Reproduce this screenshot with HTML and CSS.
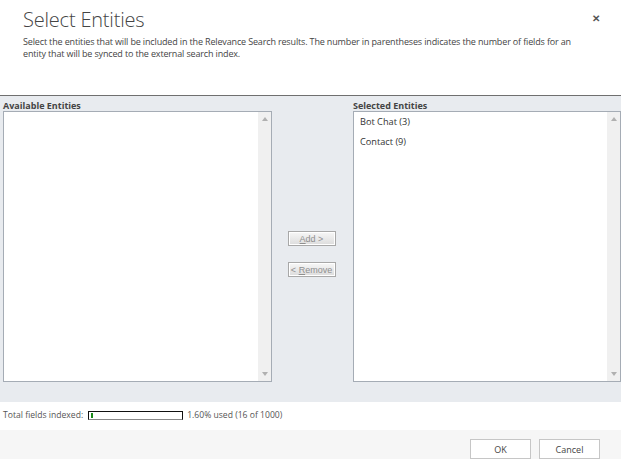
FILE: index.html
```html
<!DOCTYPE html>
<html lang="en">
<head>
	<meta charset="UTF-8">
	<title>Select Entities</title>
	<link rel="stylesheet" href="styles.css">
</head>
<body>
	<div class="dialog">
		<!-- header -->
		<div class="head">
			<h1 class="title">Select Entities</h1>
			<a href="#" class="close">&#x2715;</a>
			<p class="desc">Select the entities that will be included in the Relevance Search results. The number in parentheses indicates the number of fields for an entity that will be synced to the external search index.</p>
		</div>
		<!-- the two lists -->
		<div class="panel">
			<div class="col col-left">
				<div class="label">Available Entities</div>
				<div class="list">
					<ul class="items"></ul>
					<div class="scroll">
						<span class="arrow up"></span>
						<span class="arrow down"></span>
					</div>
				</div>
			</div>
			<div class="mid">
				<button class="btn-move" disabled><u>A</u>dd &gt;</button>
				<button class="btn-move" disabled>&lt; <u>R</u>emove</button>
			</div>
			<div class="col col-right">
				<div class="label">Selected Entities</div>
				<div class="list">
					<ul class="items">
						<li>Bot Chat (3)</li>
						<li>Contact (9)</li>
					</ul>
					<div class="scroll">
						<span class="arrow up"></span>
						<span class="arrow down"></span>
					</div>
				</div>
			</div>
		</div>
		<!-- usage -->
		<div class="usage">
			<span>Total fields indexed:</span>
			<span class="meter"><span class="meter-fill" style="width: 1.6%"></span></span>
			<span>1.60% used (16 of 1000)</span>
		</div>
		<!-- footer -->
		<div class="foot">
			<button class="btn">OK</button>
			<button class="btn">Cancel</button>
		</div>
	</div>
</body>
</html>
```

FILE: styles.css
```css
*{
	margin: 0;
	padding: 0;
	box-sizing: border-box;
}
body{
	font-family: "Open Sans", "Segoe UI", sans-serif;
	color: #444;
	background: #fff;
	width: 621px;
	height: 459px;
	overflow: hidden;
}
.dialog{
	display: flex;
	flex-direction: column;
	height: 459px;
}
.head{
	position: relative;
	height: 96px;
	padding: 7px 23px 0;
	border-bottom: 1px solid #6f6f6f;
}
.title{
	font-size: 20px;
	font-weight: 300;
	line-height: 26px;
	color: #444;
	letter-spacing: -0.2px;
}
.close{
	position: absolute;
	right: 21px;
	top: 11px;
	font-size: 10px;
	font-weight: bold;
	color: #555;
	text-decoration: none;
}
.desc{
	margin-top: 3px;
	padding-right: 22px;
	font-size: 9px;
	line-height: 12px;
	letter-spacing: -0.15px;
	color: #444;
}
.panel{
	display: flex;
	background: #e8ebef;
	height: 306px;
	padding: 4px 0 20px 3px;
}
.col-left{
	width: 269px;
}
.col-right{
	width: 268px;
}
.label{
	font-size: 9px;
	font-weight: bold;
	line-height: 11px;
	color: #444;
}
.list{
	display: flex;
	height: 271px;
	background: #fff;
	border: 1px solid #a5acb5;
}
.items{
	flex: 1;
	list-style: none;
	padding: 3px 0 0 6px;
	font-size: 9.2px;
	color: #333;
}
.items li{
	height: 20px;
	line-height: 14px;
}
.scroll{
	width: 13px;
	background: #f0f0f0;
	display: flex;
	flex-direction: column;
	justify-content: space-between;
	align-items: center;
	padding: 5px 0;
}
.arrow{
	width: 0;
	height: 0;
	border-left: 3px solid transparent;
	border-right: 3px solid transparent;
}
.arrow.up{
	border-bottom: 4px solid #b0b0b0;
}
.arrow.down{
	border-top: 4px solid #b0b0b0;
}
.mid{
	width: 81px;
	display: flex;
	flex-direction: column;
	align-items: center;
	padding-top: 131px;
	padding-right: 2px;
	gap: 16px;
}
.btn-move{
	width: 48px;
	height: 15px;
	font-family: "Liberation Sans", Arial, sans-serif;
	font-size: 9px;
	color: #8f8f8f;
	background: linear-gradient(#f7f7f7, #dcdcdc);
	border: 1px solid #a8a8a8;
	box-shadow: inset 0 0 0 1px #fff;
}
.usage{
	display: flex;
	align-items: center;
	gap: 4px;
	height: 28px;
	padding: 0 3px 2px;
	font-size: 8.6px;
	color: #555;
}
.meter{
	width: 95px;
	height: 9px;
	margin-left: 1px;
	border: 1px solid #111;
	border-bottom-color: #888;
	padding: 1px 2px;
	display: flex;
}
.meter-fill{
	display: block;
	min-width: 2px;
	height: 100%;
	background: #1a8a1a;
}
.foot{
	flex: 1;
	background: #f6f6f6;
	display: flex;
	justify-content: flex-end;
	align-items: flex-start;
	gap: 8px;
	padding: 9px 21px 0 0;
}
.btn{
	width: 61px;
	height: 20px;
	font-family: "Open Sans", "Segoe UI", sans-serif;
	font-size: 9px;
	color: #444;
	background: #fff;
	border: 1px solid #c6c6c6;
}
```
